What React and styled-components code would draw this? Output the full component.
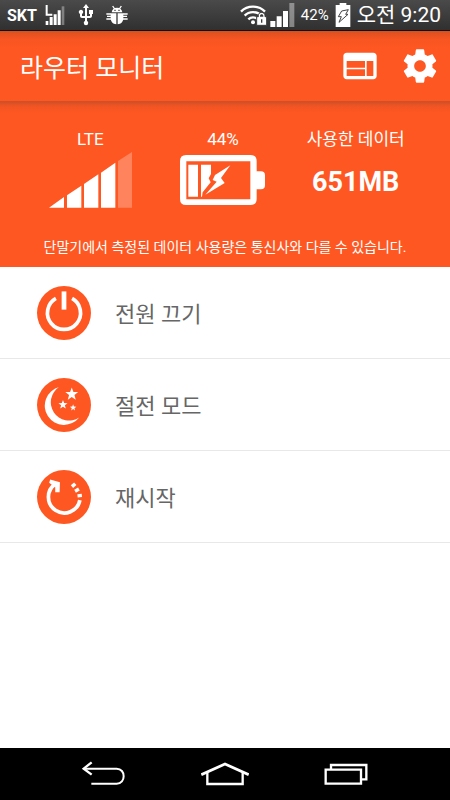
import { MdUsb, MdWeb } from "react-icons/md";
import styled, { createGlobalStyle } from "styled-components";

import React from "react";

const ACTIONS = [
  { id: "power", label: "전원 끄기" },
  { id: "sleep", label: "절전 모드" },
  { id: "restart", label: "재시작" },
];

const getStarPoints = (cx, cy, radius) =>
  Array.from({ length: 10 }, (_, i) => {
    const r = i % 2 ? radius * 0.42 : radius;
    const angle = (Math.PI / 5) * i - Math.PI / 2;
    return `${cx + r * Math.cos(angle)},${cy + r * Math.sin(angle)}`;
  }).join(" ");

const CarrierSignal = () => (
  <svg width="21" height="20" viewBox="0 0 63 60" fill="#fff">
    <path d="M2 0h6v26h14v6H2z" />
    <path d="M2 48h8v12H2zM14 36h9v24h-9zM26 28h9v32h-9zM38 16h9v44h-9z" />
    <path d="M50 4h8v56h-8z" opacity="0.35" />
  </svg>
);

const BugIcon = () => (
  <svg width="22" height="20" viewBox="0 0 66 60">
    <path
      d="M20 3l6 9M46 3l-6 9M1 27h14M51 27h14M3 34h13M50 34h13M1 42h16M49 42h16"
      stroke="#fff"
      strokeWidth="4"
    />
    <path
      d="M17 22c1-9 7-14 16-14s15 5 16 14zM14 25h17v33c-10-1-17-8-17-19zM35 25h17v14c0 11-7 18-17 19z"
      fill="#fff"
    />
    <path d="M25 14h4v4h-4zM37 14h4v4h-4z" fill="#444" />
  </svg>
);

const WifiIcon = () => (
  <svg width="28" height="22" viewBox="0 0 84 66">
    <g fill="none" stroke="#fff" strokeWidth="7">
      <path d="M3 23C22 3 56 3 75 23" />
      <path d="M14 35c13-14 37-14 50 0" />
      <path d="M25 46c8-8 20-8 28 0" />
    </g>
    <circle cx="39" cy="55" r="6" fill="#fff" />
    <path
      d="M50 38h5v-3c0-13 20-13 20 0v3h5v26H50z"
      fill="#fff"
      stroke="#3c3c3c"
      strokeWidth="3"
    />
    <path d="M60 38v-2c0-7 10-7 10 0v2z" fill="#3c3c3c" />
    <path d="M63 46h4v10h-4z" fill="#3c3c3c" />
  </svg>
);

const PhoneSignal = () => (
  <svg width="25" height="24" viewBox="0 0 75 72" fill="#fff">
    <path d="M1 54h15v18H1zM20 40h15v32H20zM39 24h15v48H39z" />
    <path d="M58 0h15v72H58z" opacity="0.4" />
  </svg>
);

const PhoneBattery = () => (
  <svg width="16" height="24" viewBox="0 0 48 72">
    <path d="M14 0h20v6h12v66H2V6h12z" fill="#fff" />
    <path
      d="M20 24l20-4-8 14h7L12 58l7-17h-9z"
      fill="#fff"
      stroke="#444"
      strokeWidth="3"
    />
  </svg>
);

const GearIcon = () => (
  <svg width="40" height="40" viewBox="0 0 24 24" fill="#fff">
    <path d="M19.43 12.98c.04-.32.07-.64.07-.98s-.03-.66-.07-.98l2.11-1.65c.19-.15.24-.42.12-.64l-2-3.46c-.12-.22-.39-.3-.61-.22l-2.49 1c-.52-.4-1.08-.73-1.69-.98l-.38-2.65C14.46 2.18 14.25 2 14 2h-4c-.25 0-.46.18-.49.42l-.38 2.65c-.61.25-1.17.59-1.69.98l-2.49-1c-.23-.09-.49 0-.61.22l-2 3.46c-.13.22-.07.49.12.64l2.11 1.65c-.04.32-.07.65-.07.98s.03.66.07.98l-2.11 1.65c-.19.15-.24.42-.12.64l2 3.46c.12.22.39.3.61.22l2.49-1c.52.4 1.08.73 1.69.98l.38 2.65c.03.24.24.42.49.42h4c.25 0 .46-.18.49-.42l.38-2.65c.61-.25 1.17-.59 1.69-.98l2.49 1c.23.09.49 0 .61-.22l2-3.46c.12-.22.07-.49-.12-.64l-2.11-1.65zM12 15.5c-1.93 0-3.5-1.57-3.5-3.5s1.57-3.5 3.5-3.5 3.5 1.57 3.5 3.5-1.57 3.5-3.5 3.5z" />
  </svg>
);

const RouterSignal = () => (
  <svg width="83" height="56" viewBox="0 0 249 168" fill="#fff">
    <path d="M0 167l45-32v32zM54 130l43-29v66H54zM105 96l43-29v100h-43zM156 62l43-30v135h-43z" />
    <path d="M207 27l42-27v167h-42z" opacity="0.27" />
  </svg>
);

const RouterBattery = () => (
  <svg width="85" height="50" viewBox="0 0 255 150">
    <path
      fill="#fff"
      fillRule="evenodd"
      d="M18 0h194q18 0 18 18v31h13q12 0 12 12v30q0 12-12 12h-13v29q0 18-18 18H18q-18 0-18-18V18Q0 0 18 0zM19 19v114h192V19z"
    />
    <path
      fill="#fff"
      d="M25 29h29v96H25zM63 29h30v28l-7 13 6 12-24 30-2 13h-3z"
    />
    <path fill="#fff" d="M151 31l-46 29-7 15 12 5-34 39 58-35-11-15z" />
  </svg>
);

const PowerIcon = () => (
  <svg width="54" height="54" viewBox="0 0 160 160">
    <circle cx="80" cy="80" r="80" fill="#ff5722" />
    <path
      d="M56 37a49 49 0 1 0 48 0"
      fill="none"
      stroke="#fff"
      strokeWidth="11"
    />
    <rect x="73" y="16" width="14" height="54" fill="#fff" />
  </svg>
);

const SleepIcon = () => (
  <svg width="54" height="54" viewBox="0 0 160 160">
    <circle cx="80" cy="80" r="80" fill="#ff5722" />
    <g fill="#fff">
      <path d="M65 27A57 57 0 1 0 125 117A54 54 0 0 1 65 27z" />
      <polygon points={getStarPoints(103, 48, 20)} />
      <polygon points={getStarPoints(77, 79, 14)} />
      <polygon points={getStarPoints(107, 88, 10)} />
    </g>
  </svg>
);

const RestartIcon = () => (
  <svg width="54" height="54" viewBox="0 0 160 160">
    <circle cx="80" cy="80" r="80" fill="#ff5722" />
    <g fill="none" stroke="#fff">
      <path d="M127 89A47 47 0 1 1 55 41" strokeWidth="11" />
      <path d="M105 41l7 8M116 55l5 9M126 71l1 10" strokeWidth="13" />
    </g>
    <path d="M39 28l29 8-1 30H54V51L36 38z" fill="#fff" />
  </svg>
);

const BackIcon = () => (
  <svg width="48" height="26" viewBox="0 0 144 78" fill="none" stroke="#fff">
    <path d="M11 23h99c28 0 28 45 0 45H34" strokeWidth="6" />
    <path d="M35 4L11 23l24 18" strokeWidth="7" />
  </svg>
);

const HomeIcon = () => (
  <svg width="48" height="26" viewBox="0 0 144 78" fill="none" stroke="#fff">
    <path d="M1 41l71-32 71 32" strokeWidth="8" />
    <path d="M19 35v34h106V35" strokeWidth="7" />
  </svg>
);

const RecentIcon = () => (
  <svg width="48" height="26" viewBox="0 0 144 78" fill="none" stroke="#fff">
    <path d="M11 26h106v42H11z" strokeWidth="7" />
    <path d="M27 26V12h106v43h-16" strokeWidth="7" />
  </svg>
);

const getActionIcon = (id) => {
  switch (id) {
    case "power":
      return <PowerIcon />;
    case "sleep":
      return <SleepIcon />;
    default:
      return <RestartIcon />;
  }
};

const App = () => {
  return (
    <Screen>
      <GlobalStyle />
      <StatusBar>
        <StatusGroup gap={8}>
          <Carrier>SKT</Carrier>
          <CarrierSignal />
          <MdUsb size={24} color="#fff" />
          <BugIcon />
        </StatusGroup>
        <StatusGroup gap={6}>
          <StatusGroup gap={2}>
            <WifiIcon />
            <PhoneSignal />
          </StatusGroup>
          <Percent>42%</Percent>
          <PhoneBattery />
          <Clock>오전 9:20</Clock>
        </StatusGroup>
      </StatusBar>

      <Toolbar>
        <Title>라우터 모니터</Title>
        <Tools>
          <IconButton aria-label="웹 페이지">
            <MdWeb size={40} />
          </IconButton>
          <IconButton aria-label="설정">
            <GearIcon />
          </IconButton>
        </Tools>
      </Toolbar>

      <Summary>
        <Stats>
          <Stat>
            <StatLabel>LTE</StatLabel>
            <StatBody>
              <RouterSignal />
            </StatBody>
          </Stat>
          <Stat>
            <StatLabel>44%</StatLabel>
            <StatBody>
              <RouterBattery />
            </StatBody>
          </Stat>
          <Stat>
            <StatLabel>사용한 데이터</StatLabel>
            <StatBody>
              <Usage>651MB</Usage>
            </StatBody>
          </Stat>
        </Stats>
        <Notice>
          단말기에서 측정된 데이터 사용량은 통신사와 다를 수 있습니다.
        </Notice>
      </Summary>

      <ActionList>
        {ACTIONS.map(({ id, label }) => (
          <ActionItem key={id}>
            <ActionButton>
              {getActionIcon(id)}
              <ActionLabel>{label}</ActionLabel>
            </ActionButton>
          </ActionItem>
        ))}
      </ActionList>

      <NavBar>
        <NavButton aria-label="뒤로">
          <BackIcon />
        </NavButton>
        <NavButton aria-label="홈">
          <HomeIcon />
        </NavButton>
        <NavButton aria-label="최근 앱">
          <RecentIcon />
        </NavButton>
      </NavBar>
    </Screen>
  );
};

export default App;

const GlobalStyle = createGlobalStyle`
  * {
    box-sizing: border-box;
  }
  body {
    margin: 0;
    background: #fff;
    font-family: Roboto, "Noto Sans CJK KR", sans-serif;
  }
  button {
    border: 0;
    padding: 0;
    background: none;
    font-family: inherit;
    cursor: pointer;
  }
  svg {
    display: block;
    flex-shrink: 0;
  }
`;

const Screen = styled.div`
  display: flex;
  flex-direction: column;
  min-height: 100vh;
`;

const StatusBar = styled.div`
  display: flex;
  justify-content: space-between;
  height: 31px;
  padding: 0 9px 0 7px;
  color: #fff;
  background: linear-gradient(#4a4a4a, #303030);
  border-bottom: 1px solid #111;
`;

const StatusGroup = styled.div`
  display: flex;
  align-items: center;
  gap: ${({ gap }) => gap}px;
`;

const Carrier = styled.span`
  font-size: 16px;
  font-weight: 700;
`;

const Percent = styled.span`
  font-size: 15px;
`;

const Clock = styled.span`
  font-size: 21px;
  line-height: 30px;
  white-space: nowrap;
`;

const Toolbar = styled.header`
  display: flex;
  align-items: center;
  justify-content: space-between;
  height: 70px;
  padding: 0 10px 0 20px;
  color: #fff;
  background: linear-gradient(#d9501f, #f75522 8px, #ff5722 18px);
`;

const Title = styled.h1`
  margin: 0;
  font-size: 25px;
  font-weight: 400;
`;

const Tools = styled.div`
  display: flex;
  gap: 20px;
`;

const IconButton = styled.button`
  color: #fff;
`;

const Summary = styled.section`
  padding: 26px 0 8px;
  color: #fff;
  background: linear-gradient(#c9502a, #f05423 5px, #ff5722 12px);
`;

const Stats = styled.div`
  display: grid;
  grid-template-columns: repeat(3, 1fr);
  padding: 0 28px 0 24px;
`;

const Stat = styled.div`
  display: flex;
  flex-direction: column;
  align-items: center;
`;

const StatLabel = styled.div`
  font-size: 17px;
  line-height: 24px;
`;

const StatBody = styled.div`
  display: flex;
  align-items: center;
  height: 58px;
`;

const Usage = styled.strong`
  padding-top: 4px;
  font-size: 27px;
  font-weight: 700;
`;

const Notice = styled.p`
  margin: 26px 0 0;
  font-size: 14px;
  line-height: 24px;
  text-align: center;
`;

const ActionList = styled.ul`
  flex: 1;
  margin: 0;
  padding: 0;
  list-style: none;
`;

const ActionItem = styled.li`
  border-bottom: 1px solid #e8e8e8;
`;

const ActionButton = styled.button`
  display: flex;
  align-items: center;
  gap: 24px;
  width: 100%;
  height: 91px;
  padding: 0 37px;
  color: #666;
`;

const ActionLabel = styled.span`
  padding-bottom: 2px;
  font-size: 22px;
`;

const NavBar = styled.nav`
  display: grid;
  grid-template-columns: repeat(3, 1fr);
  height: 52px;
  padding: 0 43px;
  background: #000;
`;

const NavButton = styled.button`
  display: flex;
  align-items: center;
  justify-content: center;
`;
